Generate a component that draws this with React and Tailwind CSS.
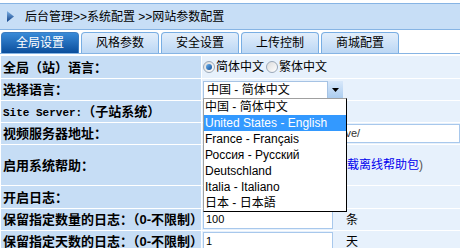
const langs = [
  '中国 - 简体中文',
  'United States - English',
  'France - Français',
  'Россия - Русский',
  'Deutschland',
  'Italia - Italiano',
  '日本 - 日本語',
]

const tabs = ['全局设置', '风格参数', '安全设置', '上传控制', '商城配置']

function Radio({ checked }) {
  return (
    <span className="inline-flex h-[12px] w-[12px] items-center justify-center rounded-full border border-[#9aa8b8] bg-gradient-to-br from-[#dcdcdc] to-white">
      {checked && <span className="h-[6px] w-[6px] rounded-full bg-gradient-to-br from-[#6fb3ee] to-[#0b4f9a]"></span>}
    </span>
  )
}

function Label({ children, h = 'h-[21px]' }) {
  return (
    <td className={`w-[200px] bg-[#c6ddf5] pl-[2px] align-middle text-[13px] font-bold text-black ${h}`}>
      {children}
    </td>
  )
}

function Value({ children }) {
  return <td className="bg-[#e7f1fc] pl-[1px] align-middle text-[12px] text-black">{children}</td>
}

export default function App() {
  return (
    <div className="h-[248px] w-[460px] overflow-hidden bg-white font-['Liberation_Sans','Noto_Sans_CJK_SC',sans-serif] leading-none">
      <div className="mt-[3px] flex h-[27px] items-center border-y border-[#86b4e4] bg-[#c7def6] pl-[7px] text-[12px] text-black">
        <svg width="7" height="11" viewBox="0 0 7 11" className="mr-[11px]">
          <defs>
            <linearGradient id="arr" x1="0" y1="0" x2="0" y2="1">
              <stop offset="0" stopColor="#7fb2e6" />
              <stop offset="1" stopColor="#0d3f86" />
            </linearGradient>
          </defs>
          <polygon points="0,0 7,5.5 0,11" fill="url(#arr)" />
        </svg>
        <span>后台管理&gt;&gt;系统配置 &gt;&gt;网站参数配置</span>
      </div>

      <div className="mt-[2px] flex h-[22px] gap-[2px] border-b border-[#86b4e4] pl-[1px]">
        {tabs.map((t, i) =>
          i === 0 ? (
            <div key={t} className="flex w-[78px] items-center justify-center rounded-t-[4px] border border-b-0 border-[#3b7cc0] bg-gradient-to-b from-[#3a8bd8] to-[#0a4e9c] text-[12px] text-white">
              {t}
            </div>
          ) : (
            <div key={t} className="flex w-[78px] items-center justify-center rounded-t-[4px] border border-b-0 border-[#79aee3] bg-gradient-to-b from-[#e2eefb] to-[#bcd7f4] text-[12px] text-black">
              {t}
            </div>
          )
        )}
      </div>

      <table className="mt-[1px] w-[461px] table-fixed border-separate border-spacing-[1px] bg-white">
        <tbody>
          <tr>
            <Label h="h-[22px]">全局（站）语言：</Label>
            <Value>
              <div className="flex items-center gap-[1px]">
                <Radio checked />
                <span className="mr-[1px]">简体中文</span>
                <Radio />
                <span>繁体中文</span>
              </div>
            </Value>
          </tr>
          <tr>
            <Label>选择语言：</Label>
            <Value>
              <div className="relative">
                <div className="flex h-[18px] w-[140px] items-stretch">
                  <div className="flex flex-1 items-center border border-[#a6c3e4] bg-white pl-[3px]">中国 - 简体中文</div>
                  <div className="flex w-[15px] items-center justify-center bg-gradient-to-b from-[#d8e8fa] to-[#a9cbef]">
                    <svg width="7" height="4" viewBox="0 0 7 4">
                      <polygon points="0,0 7,0 3.5,4" fill="#000" />
                    </svg>
                  </div>
                </div>
                <div className="absolute left-0 top-[17px] z-10 w-[144px] border border-t-[#a0a0a0] border-l-[#a0a0a0] border-r-black border-b-black bg-white">
                  {langs.map((l, i) => (
                    <div key={l} className={`h-[16px] pl-[1px] text-[12px] leading-[16px] ${i === 1 ? 'bg-[#3399ff] text-white' : 'text-black'}`}>
                      {l}
                    </div>
                  ))}
                </div>
              </div>
            </Value>
          </tr>
          <tr>
            <Label>
              <span className="font-['Liberation_Mono',monospace] text-[11px]">Site Server:</span>（子站系统）
            </Label>
            <Value></Value>
          </tr>
          <tr>
            <Label>视频服务器地址：</Label>
            <Value>
              <div className="flex h-[19px] items-center border border-[#a8c8ec] bg-white pl-[2px] text-[11px] text-[#333]">
                http://192.168.100.10:8080/live/
              </div>
            </Value>
          </tr>
          <tr>
            <Label h="h-[40px]">启用系统帮助：</Label>
            <Value>
              <span>启用系统在线帮助（</span>
              <span className="text-[#0000ee]">点击下载离线帮助包</span>
              <span className="text-[#555]">)</span>
            </Value>
          </tr>
          <tr>
            <Label h="h-[22px]">开启日志：</Label>
            <Value></Value>
          </tr>
          <tr>
            <Label>保留指定数量的日志：（0-不限制）</Label>
            <Value>
              <div className="flex items-center">
                <div className="flex h-[19px] w-[130px] items-center border border-[#a8c8ec] bg-white pl-[2px] text-[11px]">100</div>
                <span className="ml-[13px]">条</span>
              </div>
            </Value>
          </tr>
          <tr>
            <Label>保留指定天数的日志：（0-不限制）</Label>
            <Value>
              <div className="flex items-center">
                <div className="flex h-[19px] w-[130px] items-center border border-[#a8c8ec] bg-white pl-[2px] text-[11px]">1</div>
                <span className="ml-[13px]">天</span>
              </div>
            </Value>
          </tr>
        </tbody>
      </table>
    </div>
  )
}
